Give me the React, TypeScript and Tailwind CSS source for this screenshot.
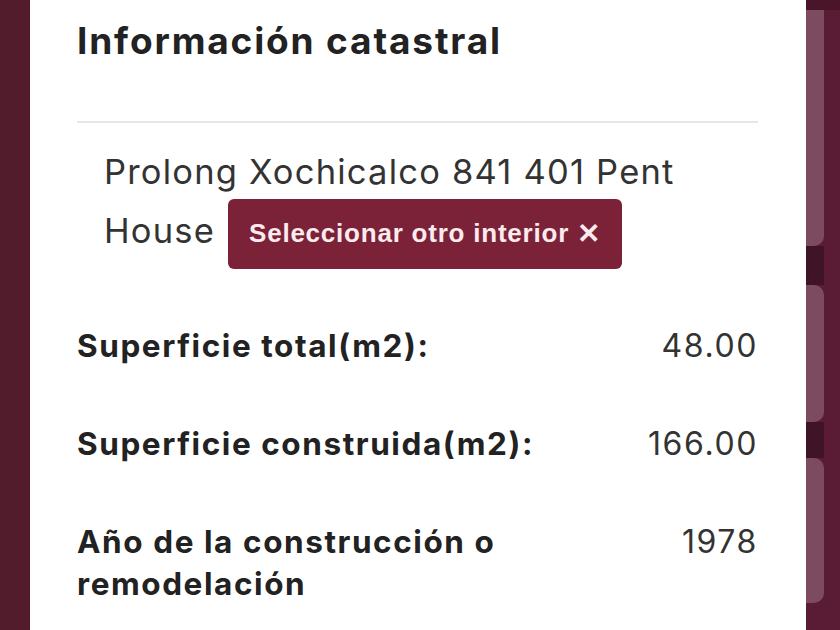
import React from "react";

const ROWS = [
  { label: "Superficie total(m2):", value: "48.00" },
  { label: "Superficie construida(m2):", value: "166.00" },
  { label: "Año de la construcción o remodelación", value: "1978" },
];

function SideTabs() {
  return (
    <div className="flex w-[34px] shrink-0 flex-col bg-[#5a1b35]">
      <div className="h-[10px] shrink-0 bg-[#4a1528]" />
      <div className="h-[236px] w-[18px] shrink-0 rounded-br-[10px] bg-[#7d4b60]" />
      <div className="h-[39px] w-[18px] shrink-0 bg-[#3f1427]" />
      <div className="h-[137px] w-[18px] shrink-0 rounded-r-[10px] bg-[#7d4b60]" />
      <div className="h-[36px] w-[18px] shrink-0 bg-[#3f1427]" />
      <div className="h-[145px] w-[18px] shrink-0 rounded-r-[10px] bg-[#7d4b60]" />
    </div>
  );
}

export default function App() {
  return (
    <div
      className="flex h-[630px] w-[840px] overflow-hidden"
      style={{ fontFamily: "Inter, 'Noto Sans', sans-serif" }}
    >
      <div className="w-[30px] shrink-0 bg-[#531c2d]" />

      <section className="min-w-0 flex-1 bg-white pl-[47px] pr-[48px]">
        <h2 className="pt-[20px] text-[37px] font-bold leading-[42px] tracking-[0.05em] text-[#222]">
          Información catastral
        </h2>

        <div className="mt-[59px] h-[2px] bg-[#e6e6e6]" />

        <p className="mt-[19px] pl-[27px] text-[34.5px] leading-[59px] tracking-[0.035em] text-[#333]">
          Prolong Xochicalco 841 401 Pent House{" "}
          <button
            type="button"
            className="-my-[8px] ml-[2px] inline-flex h-[70px] items-center gap-[8px] rounded-[6px] bg-[#7b2238] px-[21px] align-middle text-[26px] font-bold tracking-[0.03em] text-[#fbeaee]"
            style={{ fontFamily: "'Liberation Sans', Arial, sans-serif" }}
          >
            <span>Seleccionar otro interior</span>
            <span className="text-[28px]">✕</span>
          </button>
        </p>

        <dl className="mt-[64px] flex flex-col gap-[56px]">
          {ROWS.map((row) => (
            <div key={row.label} className="flex items-start justify-between gap-6">
              <dt className="min-w-0 flex-1 text-[31.5px] font-bold leading-[42px] tracking-[0.05em] text-[#222]">
                {row.label}
              </dt>
              <dd className="shrink-0 text-[32px] leading-[42px] tracking-[0.05em] text-[#333]">
                {row.value}
              </dd>
            </div>
          ))}
        </dl>
      </section>

      <SideTabs />
    </div>
  );
}
